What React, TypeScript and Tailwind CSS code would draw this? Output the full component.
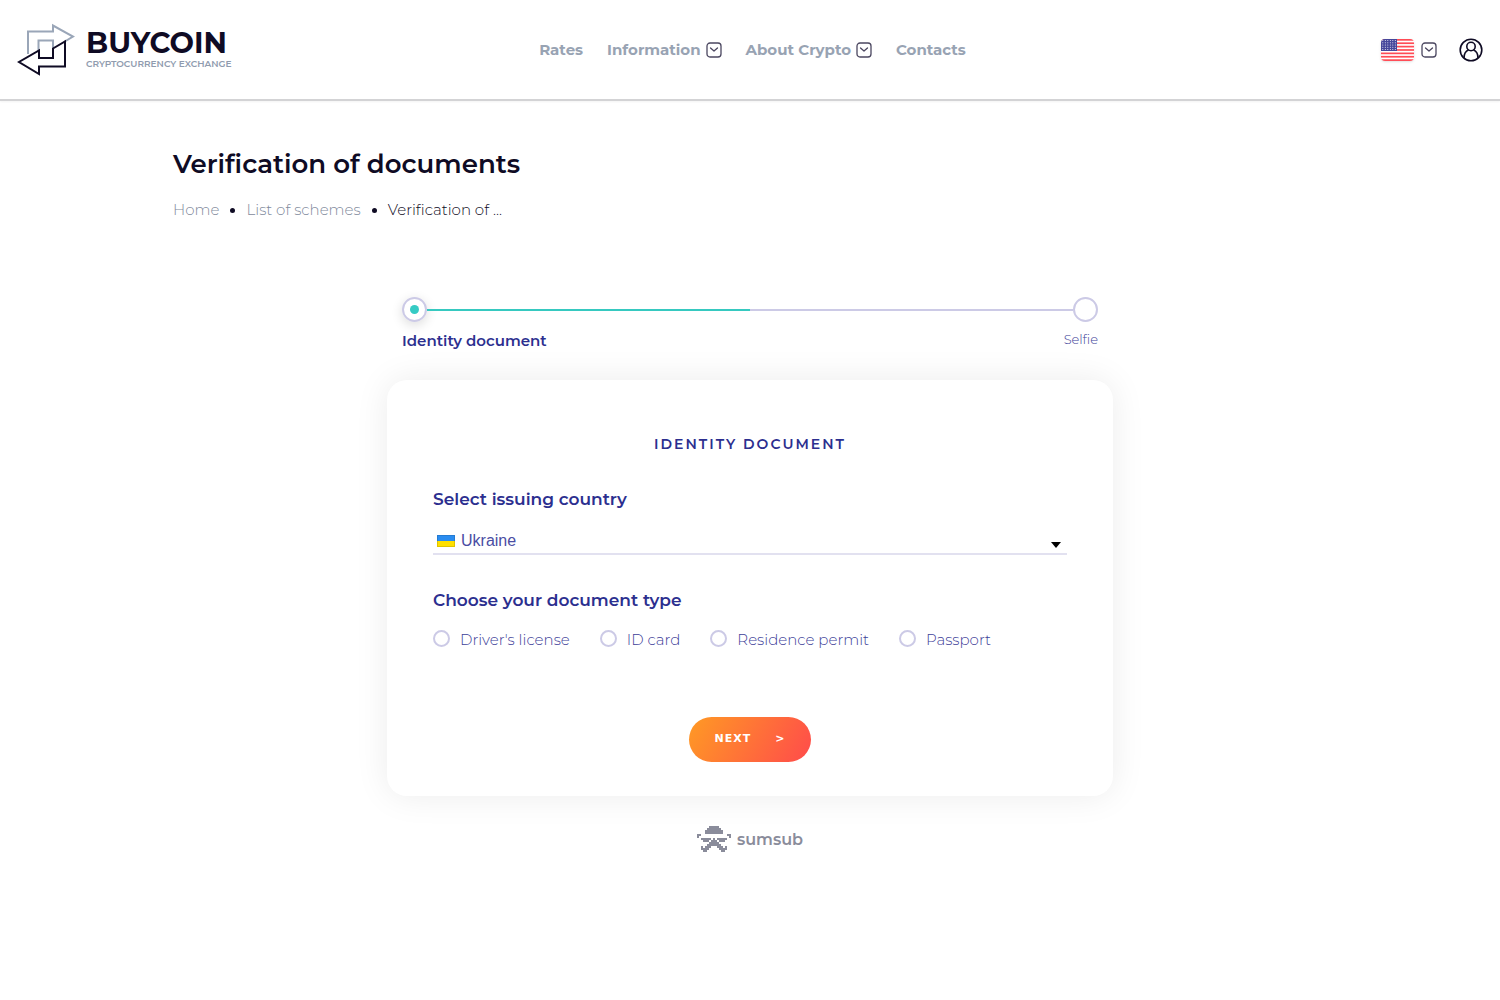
import { useState } from 'react';

const NAVY = '#0f0b24';

// ─── Icons ───────────────────────────────────────────────

function LogoMark() {
  return (
    <svg width="58" height="54" viewBox="0 0 58 54" fill="none" strokeWidth="2" aria-hidden="true">
      <path stroke="#9aa6b8" d="M11 31V8.500H36V2.500L56 13.500L47 19M21.500 29V17.500H36V26" />
      <path stroke={NAVY} d="M48 18.500V43.500H22V51L2 39L22 27.500V35H36V25.500Z" />
    </svg>
  );
}

function BoxChevron() {
  return (
    <svg width="16" height="16" viewBox="0 0 16 16" fill="none" stroke="#4b4760" strokeWidth="1.300" aria-hidden="true">
      <rect x="1" y="1" width="14" height="14" rx="3" />
      <path d="M4.500 6L8 9L11.500 6" strokeLinecap="round" strokeLinejoin="round" />
    </svg>
  );
}

function UsFlag() {
  return (
    <svg width="33" height="22" viewBox="0 0 33 22" className="rounded-sm shadow" aria-hidden="true">
      <rect width="33" height="22" fill="#fff" />
      {[0, 1, 2, 3, 4, 5, 6].map((i) => (
        <rect key={i} y={i * 3.38} width="33" height="1.700" fill="#ff4b55" />
      ))}
      <rect width="16" height="12" fill="#46479b" />
      {[0, 1, 2, 3, 4].map((row) =>
        [0, 1, 2, 3, 4, 5].map((col) => (
          <circle key={`${row}-${col}`} cx={1.8 + col * 2.5} cy={1.6 + row * 2.2} r="0.500" fill="#fff" />
        )),
      )}
    </svg>
  );
}

function UserIcon() {
  return (
    <svg width="24" height="24" viewBox="0 0 24 24" fill="none" stroke={NAVY} strokeWidth="1.600" aria-hidden="true">
      <circle cx="12" cy="12" r="10.800" />
      <circle cx="12" cy="8.500" r="4.200" />
      <path d="M5 20C5 16 7 13 9.500 12M14.500 12C17 13 19 16 19 20" />
    </svg>
  );
}

function UkraineFlag() {
  return (
    <svg width="18" height="12" viewBox="0 0 18 12" aria-hidden="true">
      <rect width="18" height="6" fill="#2a8cf0" />
      <rect y="6" width="18" height="6" fill="#ffe000" />
      <path d="M0.500 0.500H17.500V11.500H0.500Z" fill="none" stroke="#000" strokeOpacity="0.120" />
    </svg>
  );
}

// pixel rows of the mascot, one character per 2px cell
const mascot = [
  '......#####......',
  '.....#######.....',
  '....#########....',
  '....#########....',
  '##.............##',
  '#...............#',
  '..#####.#.#####..',
  '...###.###.###...',
  '......#####......',
  '.....#######.....',
  '..#.###...###.#..',
  '..####.....####..',
  '...##.......##...',
];

function SumsubMark() {
  return (
    <svg width="34" height="26" viewBox="0 0 17 13" fill="#8a8c9b" shapeRendering="crispEdges" aria-hidden="true">
      {mascot.map((line, y) =>
        line.split('').map((cell, x) => cell === '#' && <rect key={`${x}-${y}`} x={x} y={y} width="1" height="1" />),
      )}
    </svg>
  );
}

// ─── Data ────────────────────────────────────────────────

const navItems = [
  { label: 'Rates', menu: false },
  { label: 'Information', menu: true },
  { label: 'About Crypto', menu: true },
  { label: 'Contacts', menu: false },
];

const documentTypes = ["Driver's license", 'ID card', 'Residence permit', 'Passport'];

// ─── Page ────────────────────────────────────────────────

function Header() {
  return (
    <header className="grid h-[101px] grid-cols-[1fr_auto_1fr] items-center border-b-2 border-[#d3d3d5] px-[17px] pt-px shadow-xs">
      <a href="#" className="flex items-center gap-[11px]">
        <LogoMark />
        <span className="flex flex-col pb-0.5">
          <span className="text-[29px] leading-[30px] font-bold text-[#0f0b24]">BUYCOIN</span>
          <span className="text-[9px] leading-[12px] font-semibold text-[#8f9bae]">CRYPTOCURRENCY EXCHANGE</span>
        </span>
      </a>
      <nav className="flex items-center gap-6 pl-[5px] text-[15px] font-bold text-[#98a3b3]">
        {navItems.map((item) =>
          item.menu ? (
            <button key={item.label} type="button" className="flex items-center gap-[5px]">
              {item.label}
              <BoxChevron />
            </button>
          ) : (
            <a key={item.label} href="#">
              {item.label}
            </a>
          ),
        )}
      </nav>
      <div className="flex items-center justify-end gap-[22px]">
        <button type="button" aria-label="Language" className="flex items-center gap-[7px]">
          <UsFlag />
          <BoxChevron />
        </button>
        <button type="button" aria-label="Account">
          <UserIcon />
        </button>
      </div>
    </header>
  );
}

function Steps() {
  return (
    <div className="px-[15px]">
      <div className="flex items-center">
        <span className="flex size-[25px] items-center justify-center rounded-full border-2 border-[#cccae6] shadow-[0_3px_12px_rgba(0,0,0,0.14)]">
          <span className="size-[9px] rounded-full bg-[#36cbc4]" />
        </span>
        <span className="h-[2px] flex-1 bg-[#36c9c0]" />
        <span className="h-[2px] flex-1 bg-[#cccae6]" />
        <span className="size-[25px] rounded-full border-2 border-[#cccae6]" />
      </div>
      <div className="mt-2 flex items-start justify-between">
        <span className="text-[15px] leading-[22px] font-semibold text-[#2c2f8f]">Identity document</span>
        <span className="text-[13px] leading-[18px] font-light text-[#3d4098]">Selfie</span>
      </div>
    </div>
  );
}

function DocumentForm() {
  const [country, setCountry] = useState('Ukraine');
  const [documentType, setDocumentType] = useState('');

  return (
    <form
      onSubmit={(e) => e.preventDefault()}
      className="mt-7 rounded-[20px] bg-white px-[46px] pt-[52px] pb-[34px] text-[#2c2f8f] shadow-[0_0_34px_rgba(0,0,0,0.08)]"
    >
      <h2 className="text-center text-[14px] leading-[24px] font-semibold tracking-[2px]">IDENTITY DOCUMENT</h2>

      <label htmlFor="country" className="mt-[31px] block text-[17px] leading-[24px] font-semibold">
        Select issuing country
      </label>
      <div className="mt-[18px] flex h-[26px] items-center gap-[6px] border-b-2 border-[#e2e1f0] pr-[5px] pl-1">
        <UkraineFlag />
        <select
          id="country"
          value={country}
          onChange={(e) => setCountry(e.target.value)}
          className="h-6 flex-1 appearance-none bg-transparent font-['Liberation_Sans',Arial,sans-serif] text-base leading-6 text-[#4a4da3] outline-none"
        >
          <option>Ukraine</option>
        </select>
        <svg width="12" height="6" viewBox="0 0 12 6" className="mt-2" aria-hidden="true">
          <path d="M1 0h10L6 6z" fill="#000" />
        </svg>
      </div>

      <fieldset className="mt-[33px]">
        <legend className="text-[17px] leading-[24px] font-semibold">Choose your document type</legend>
        <div className="mt-4 flex flex-wrap gap-[30px]">
          {documentTypes.map((type) => (
            <label key={type} className="flex items-center gap-[10px] text-[15px] leading-[24px] font-light text-[#3d4098]">
              <input
                type="radio"
                name="documentType"
                checked={documentType === type}
                onChange={() => setDocumentType(type)}
                className="mb-1 size-[17px] appearance-none rounded-full border-2 border-[#cccae6] checked:bg-[#36cbc4]"
              />
              {type}
            </label>
          ))}
        </div>
      </fieldset>

      <div className="mt-[65px] flex justify-center">
        <button
          type="submit"
          className="flex h-[45px] items-center gap-6 rounded-full bg-[linear-gradient(120deg,#ff9a24,#ff4b4b)] px-[26px] font-['DejaVu_Sans',Verdana,sans-serif] text-[11px] font-bold tracking-[1px] text-white"
        >
          <span>NEXT</span>
          <span>&gt;</span>
        </button>
      </div>
    </form>
  );
}

export default function App() {
  return (
    <div className="min-h-screen bg-white font-[Montserrat,Inter,sans-serif] text-[#0f0b24]">
      <Header />
      <main className="mx-auto max-w-[1186px] px-4">
        <h1 className="mt-[45px] text-[26px] leading-9 font-semibold [font-variant-ligatures:none]">
          Verification of documents
        </h1>
        <nav
          aria-label="Breadcrumb"
          className="mt-4 flex items-center gap-[11px] text-[15px] leading-6 font-light [font-variant-ligatures:none]"
        >
          <a href="#" className="text-[#7f8a9c]">Home</a>
          <span className="size-[5px] rounded-full bg-[#0f0b24]" />
          <a href="#" className="text-[#7f8a9c]">List of schemes</a>
          <span className="size-[5px] rounded-full bg-[#0f0b24]" />
          <span>Verification of ...</span>
        </nav>
        <section className="mx-auto mt-[75px] max-w-[726px]">
          <Steps />
          <DocumentForm />
          <a href="#" className="mt-[30px] flex items-center justify-center gap-[6px] text-[#8a8c9b]">
            <SumsubMark />
            <span className="pt-0.5 text-[16px] leading-6 font-semibold">sumsub</span>
          </a>
        </section>
      </main>
    </div>
  );
}
